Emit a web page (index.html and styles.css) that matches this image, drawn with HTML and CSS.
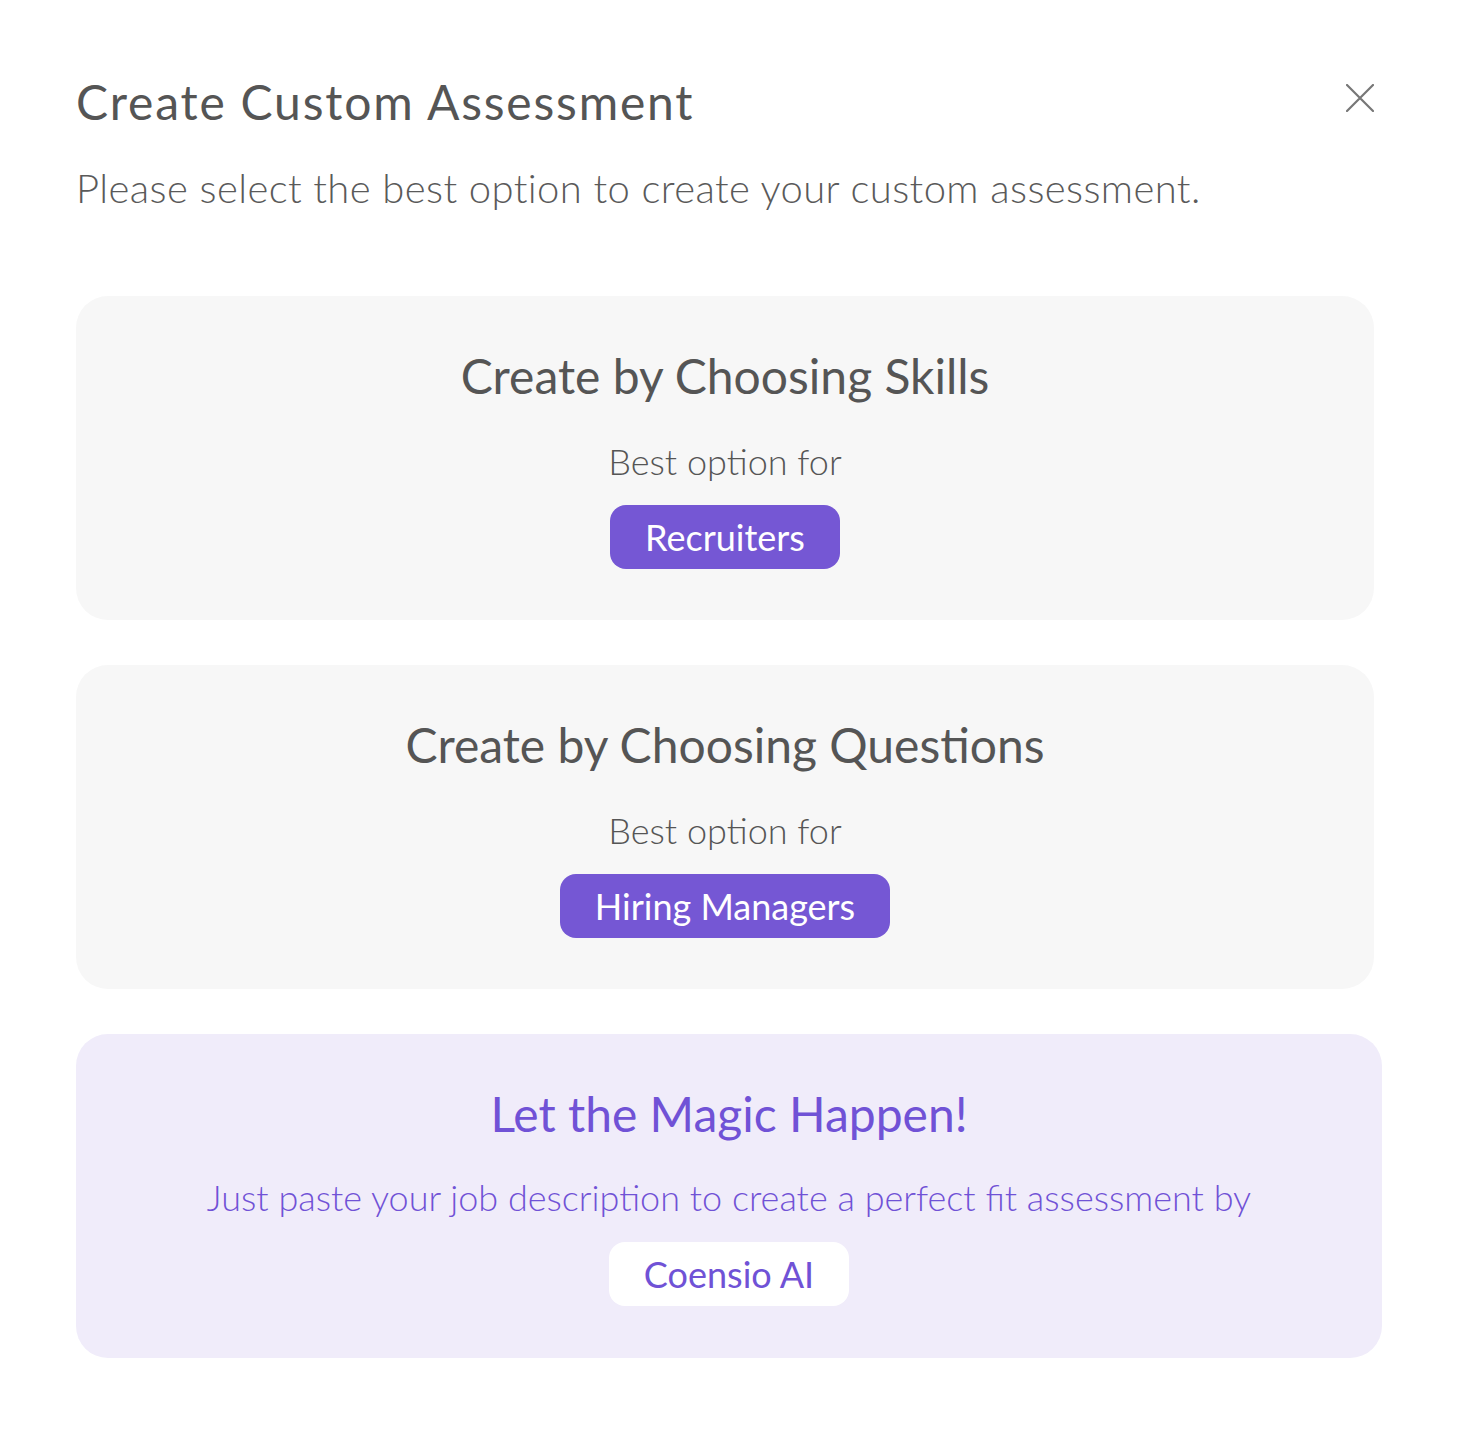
FILE: index.html
```html
<!DOCTYPE html>
<html lang="en">
<head>
<meta charset="utf-8">
<title>Create Custom Assessment</title>
<link rel="stylesheet" href="styles.css">
</head>
<body>
<div class="modal">
  <div class="header">
    <h1 class="title">Create Custom Assessment</h1>
    <button class="close" aria-label="Close">
      <svg width="28" height="28" viewBox="0 0 28 28"><path d="M1 1 L27 27 M27 1 L1 27" stroke="#777" stroke-width="2.2" stroke-linecap="round" fill="none"/></svg>
    </button>
  </div>
  <p class="subtitle">Please select the best option to create your custom assessment.</p>

  <div class="options">
    <div class="card">
      <h2 class="card-title">Create by Choosing Skills</h2>
      <p class="card-text">Best option for</p>
      <span class="tag">Recruiters</span>
    </div>
    <div class="card">
      <h2 class="card-title">Create by Choosing Questions</h2>
      <p class="card-text">Best option for</p>
      <span class="tag">Hiring Managers</span>
    </div>
    <div class="card card-magic">
      <h2 class="card-title magic-title">Let the Magic Happen!</h2>
      <p class="card-text magic-text">Just paste your job description to create a perfect fit assessment by</p>
      <span class="tag tag-white">Coensio AI</span>
    </div>
  </div>
</div>
</body>
</html>
```

FILE: styles.css
```css
* { box-sizing: border-box; }
html, body { margin: 0; padding: 0; background: #ffffff; }
body {
  font-family: "Lato", "Open Sans", sans-serif;
  color: #555555;
}
.modal {
  padding: 74px 76px 0 76px;
}
.header {
  display: flex;
  justify-content: space-between;
  align-items: flex-start;
  padding-right: 8px;
}
.title {
  margin: 0;
  font-size: 48px;
  line-height: 56px;
  font-weight: 400;
  letter-spacing: 1.8px;
  color: #555555;
}
.close {
  border: 0;
  background: none;
  padding: 0;
  margin-top: 10px;
  width: 28px;
  height: 28px;
  cursor: pointer;
}
.close svg { display: block; }
.subtitle {
  margin: 34px 0 0 0;
  font-size: 40px;
  line-height: 48px;
  font-weight: 300;
  letter-spacing: 0.4px;
  color: #5a5a5a;
}
.options {
  margin-top: 84px;
  display: flex;
  flex-direction: column;
  gap: 45px;
}
.card {
  margin-right: 8px;
  background: #f7f7f7;
  border-radius: 32px;
  padding: 52px 24px 51px;
  display: flex;
  flex-direction: column;
  align-items: center;
  height: 324px;
}
.card-title {
  margin: 0;
  font-size: 48px;
  line-height: 56px;
  font-weight: 400;
  color: #555555;
}
.card-text {
  margin: 35px 0 0 0;
  font-size: 36px;
  line-height: 44px;
  font-weight: 300;
  color: #555555;
}
.tag {
  margin-top: 22px;
  height: 64px;
  padding: 0 35px;
  border-radius: 16px;
  background: #7557d4;
  color: #ffffff;
  font-size: 36px;
  line-height: 64px;
  font-weight: 400;
}
.card-magic {
  margin-right: 0;
  background: #f0ecfa;
}
.magic-title { color: #7052d6; }
.magic-text {
  margin-top: 33px;
  color: #7052d6;
}
.tag-white {
  margin-top: 23px;
  background: #ffffff;
  color: #7052d6;
}
```
